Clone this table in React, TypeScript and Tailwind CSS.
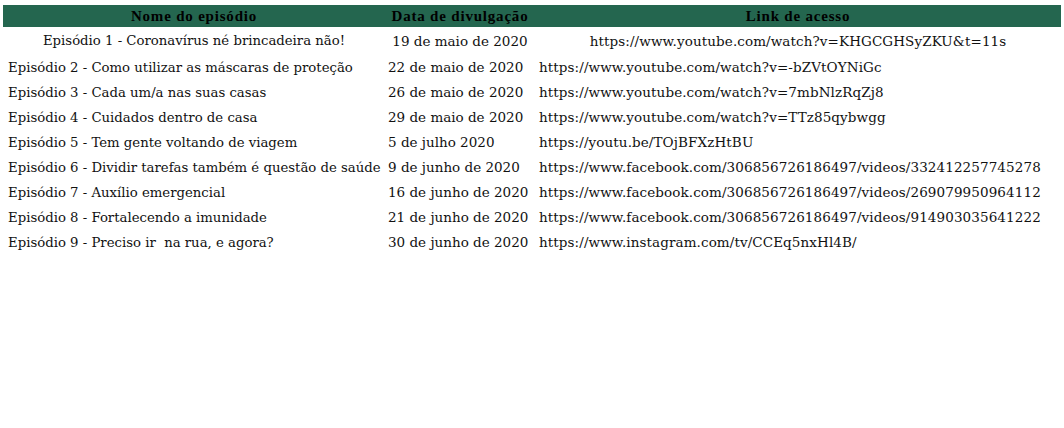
const rows: [string, string, string][] = [
  ["Episódio 2 - Como utilizar as máscaras de proteção", "22 de maio de 2020", "https://www.youtube.com/watch?v=-bZVtOYNiGc"],
  ["Episódio 3 - Cada um/a nas suas casas", "26 de maio de 2020", "https://www.youtube.com/watch?v=7mbNlzRqZj8"],
  ["Episódio 4 - Cuidados dentro de casa", "29 de maio de 2020", "https://www.youtube.com/watch?v=TTz85qybwgg"],
  ["Episódio 5 - Tem gente voltando de viagem", "5 de julho 2020", "https://youtu.be/TOjBFXzHtBU"],
  ["Episódio 6 - Dividir tarefas também é questão de saúde", "9 de junho de 2020", "https://www.facebook.com/306856726186497/videos/332412257745278"],
  ["Episódio 7 - Auxílio emergencial", "16 de junho de 2020", "https://www.facebook.com/306856726186497/videos/269079950964112"],
  ["Episódio 8 - Fortalecendo a imunidade", "21 de junho de 2020", "https://www.facebook.com/306856726186497/videos/914903035641222"],
  ["Episódio 9 - Preciso ir  na rua, e agora?", "30 de junho de 2020", "https://www.instagram.com/tv/CCEq5nxHl4B/"],
];

const head = "h-[22px] bg-[#24664f] flex items-center justify-center font-['Liberation_Serif',serif] font-bold text-[15px] tracking-[0.8px] text-black";

export default function App() {
  return (
    <div className="w-[1064px] h-[428px] bg-white pt-[5px] pl-[3px] font-['DejaVu_Serif',serif] text-[13.5px] text-[#111]">
      <div className="grid grid-cols-[382px_150px_526px]">
        <div className={head}>Nome do episódio</div>
        <div className={head}>Data de divulgação</div>
        <div className={head}>Link de acesso</div>

        <div className="h-[28px] flex items-center justify-center whitespace-nowrap text-[13.25px]">Episódio 1 - Coronavírus né brincadeira não!</div>
        <div className="h-[28px] flex items-center justify-center whitespace-nowrap">19 de maio de 2020</div>
        <div className="h-[28px] flex items-center justify-center whitespace-nowrap tracking-[0.1px]">https://www.youtube.com/watch?v=KHGCGHSyZKU&amp;t=11s</div>

        {rows.map((r) => (
          <div key={r[0]} className="contents">
            <div className="h-[25px] flex items-center pl-[5px] whitespace-pre text-[13.25px]">{r[0]}</div>
            <div className="h-[25px] flex items-center pl-[3px] whitespace-nowrap">{r[1]}</div>
            <div className="h-[25px] flex items-center pl-[4px] whitespace-nowrap tracking-[0.1px]">{r[2]}</div>
          </div>
        ))}
      </div>
    </div>
  );
}
